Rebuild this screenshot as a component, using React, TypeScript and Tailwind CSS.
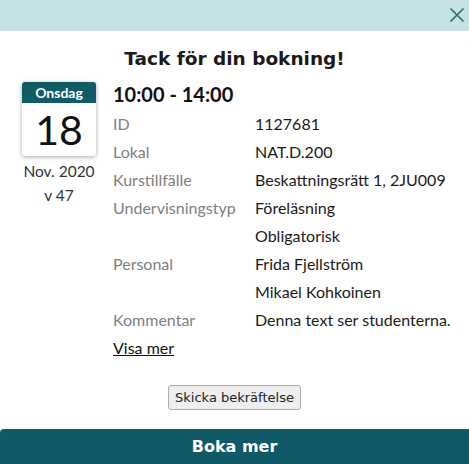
import React from "react";

const rows: [string, string][] = [
  ["ID", "1127681"],
  ["Lokal", "NAT.D.200"],
  ["Kurstillfälle", "Beskattningsrätt 1, 2JU009"],
  ["Undervisningstyp", "Föreläsning"],
  ["", "Obligatorisk"],
  ["Personal", "Frida Fjellström"],
  ["", "Mikael Kohkoinen"],
  ["Kommentar", "Denna text ser studenterna."],
];

export default function App() {
  return (
    <div className="w-[469px] h-[464px] bg-white flex flex-col overflow-hidden" style={{ fontFamily: "Lato, sans-serif" }}>
      <div className="h-[31px] bg-[#c4e1e3] flex items-center justify-end pr-[4px] shrink-0">
        <svg width="16" height="16" viewBox="0 0 16 16" className="mt-[-1px]">
          <path d="M1.5 1.5 L14.5 14.5 M14.5 1.5 L1.5 14.5" stroke="#2e6e75" strokeWidth="1.7" fill="none" />
        </svg>
      </div>
      <h1 className="text-center text-[18.5px] font-bold text-[#1a1a1a] mt-[17px] leading-[22px]" style={{ fontFamily: "'DejaVu Sans', sans-serif" }}>
        Tack för din bokning!
      </h1>
      <div className="flex mt-[12px] pl-[22px]">
        <div className="w-[74px] flex flex-col items-center">
          <div className="w-[74px] rounded-[3px] shadow-[0_1px_4px_rgba(0,0,0,0.35)] overflow-hidden bg-white">
            <div className="h-[21px] bg-[#0f5c66] text-white text-[14px] font-bold flex items-center justify-center">Onsdag</div>
            <div className="h-[53px] flex items-center justify-center text-[41px] text-[#111] leading-none pb-[1px]">18</div>
          </div>
          <div className="mt-[3px] text-[15.5px] text-[#333] leading-[24px] whitespace-nowrap">Nov. 2020</div>
          <div className="text-[15.5px] text-[#333] leading-[24px]">v 47</div>
        </div>
        <div className="ml-[17px] flex flex-col">
          <div className="text-[20px] font-bold text-[#111] leading-[26px] mt-[-1px]">10:00 - 14:00</div>
          <div className="grid grid-cols-[142px_1fr] text-[16px] leading-[28px] mt-[3px]">
            {rows.map(([l, v], i) => (
              <React.Fragment key={i}>
                <div className="text-[#808080]">{l}</div>
                <div className="text-[#1a1a1a] whitespace-nowrap">{v}</div>
              </React.Fragment>
            ))}
          </div>
          <a className="text-[16px] leading-[28px] text-[#111] underline self-start">Visa mer</a>
        </div>
      </div>
      <div className="flex justify-center mt-[23px]">
        <button className="h-[25px] px-[6px] bg-[#efefef] border border-[#adadad] rounded-[3px] text-[13px] text-[#222] font-medium" style={{ fontFamily: "'DejaVu Sans', sans-serif" }}>
          Skicka bekräftelse
        </button>
      </div>
      <div className="mt-auto h-[35px] bg-[#0f5a66] rounded-tl-[4px] flex items-center justify-center text-white text-[16px] font-bold" style={{ fontFamily: "'DejaVu Sans', sans-serif" }}>
        Boka mer
      </div>
    </div>
  );
}
